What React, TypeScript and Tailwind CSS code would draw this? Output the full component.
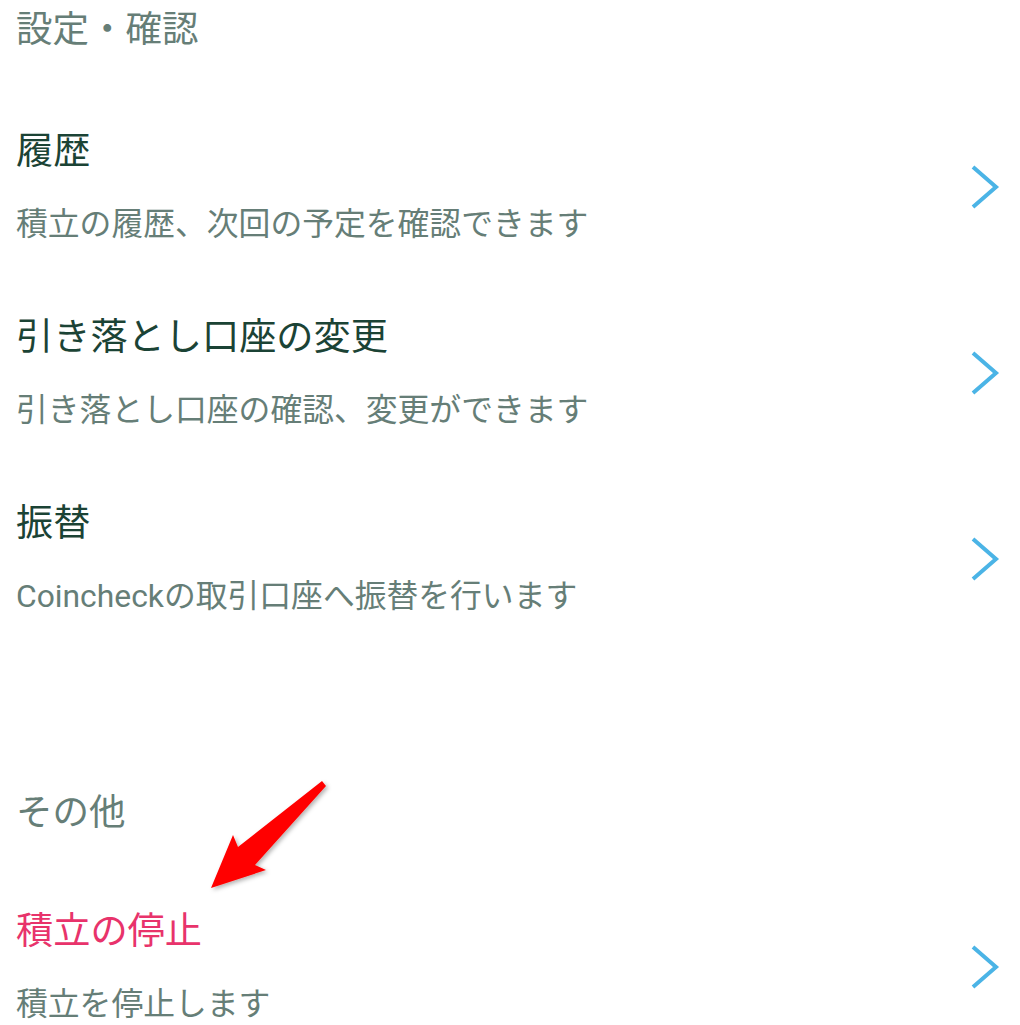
import React from "react";

const font = { fontFamily: "Roboto, 'Noto Sans CJK JP', sans-serif" };

type Item = { title: string; desc: string; danger?: boolean };

const settings: Item[] = [
  { title: "履歴", desc: "積立の履歴、次回の予定を確認できます" },
  { title: "引き落とし口座の変更", desc: "引き落とし口座の確認、変更ができます" },
  { title: "振替", desc: "Coincheckの取引口座へ振替を行います" },
];

function Chevron() {
  return (
    <svg width="30" height="46" viewBox="0 0 30 46" fill="none">
      <path d="M3 3 L26 23 L3 43" stroke="#4bb4e6" strokeWidth="4" />
    </svg>
  );
}

function Row({ item }: { item: Item }) {
  return (
    <div className="flex h-[186px] items-center justify-between pl-4 pr-[20px]">
      <div className="flex flex-col gap-[29px]">
        <div
          className={`text-[37.2px] leading-[44px] ${
            item.danger ? "text-[#e8336b]" : "text-[#1b4335]"
          }`}
        >
          {item.title}
        </div>
        <div className="text-[31.8px] leading-[44px] text-[#667e77]">{item.desc}</div>
      </div>
      <Chevron />
    </div>
  );
}

export default function App() {
  return (
    <main className="relative h-[1025px] w-[1020px] overflow-hidden bg-white" style={font}>
      <h2 className="flex h-[60px] items-center pl-4 text-[36.5px] text-[#667e77]">設定・確認</h2>
      <div className="mt-[34px]">
        {settings.map((s) => (
          <Row key={s.title} item={s} />
        ))}
      </div>

      <h2 className="mt-[131px] flex h-[60px] items-center pl-4 text-[36.5px] text-[#667e77]">その他</h2>
      <div className="mt-[31px]">
        <Row item={{ title: "積立の停止", desc: "積立を停止します", danger: true }} />
      </div>

      {/* annotation arrow */}
      <svg className="pointer-events-none absolute inset-0" width="1020" height="1025">
        <defs>
          <filter id="sh" x="-20%" y="-20%" width="140%" height="140%">
            <feDropShadow dx="2" dy="2" stdDeviation="2" floodColor="#000" floodOpacity="0.3" />
          </filter>
        </defs>
        <polygon
          points="322,781 326,786 255,865 266,870 211,888 233,835 238,847"
          fill="#ff0000"
          filter="url(#sh)"
        />
      </svg>
    </main>
  );
}
